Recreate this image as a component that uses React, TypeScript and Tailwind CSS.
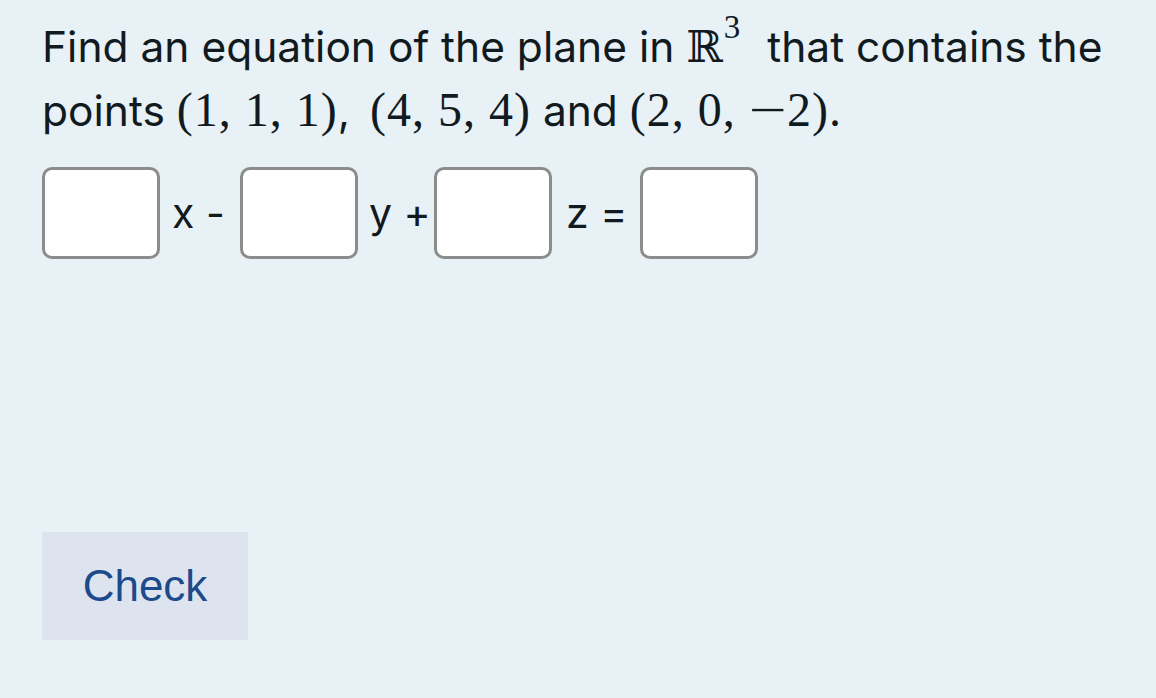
import React from "react";

function AnswerBox() {
    return (
        <input
            type="text"
            className="w-[118px] h-[92px] shrink-0 rounded-[10px] border-[3px] border-[#8c8c8c] bg-white outline-none"
        />
    );
}

function Op({ label, className }: { label: string; className: string }) {
    return (
        <span className={`shrink-0 flex items-center h-[92px] ${className}`}>
            <span className="font-['Inter',sans-serif] text-[41px] leading-none text-[#111a1f] whitespace-pre">
                {label}
            </span>
        </span>
    );
}

export default function App() {
    const math = "font-['Liberation_Serif',serif] text-[48px] tracking-[1px]";
    return (
        <div className="min-h-[698px] w-full bg-[#e8f1f5] font-['Inter',sans-serif] text-[#111a1f]">
            <div className="pl-[42px] pr-6 pt-[14px]">
                <p className="text-[42.5px] leading-[63px]">
                    Find an equation of the plane in{" "}
                    <span className={math}>
                        <span className="font-['DejaVu_Serif',serif] text-[44px]">ℝ</span>
                        <sup className="text-[33px] relative -top-[24px] mr-[14px]">3</sup>
                    </span>{" "}
                    that contains the
                    <br />
                    points <span className={math}>(1, 1, 1)</span>,{" "}
                    <span className={`${math} ml-[8px]`}>(4, 5, 4)</span> and{" "}
                    <span className={math}>
                        (2, 0, <span className="inline-block scale-x-[1.4] mx-[5px]">−</span>2).
                    </span>
                </p>

                <div className="mt-[25px] flex items-center">
                    <AnswerBox />
                    <Op label="x -" className="w-[80px] pl-[12px]" />
                    <AnswerBox />
                    <Op label="y +" className="w-[76px] pl-[11px]" />
                    <AnswerBox />
                    <Op label="z =" className="w-[88px] pl-[14px]" />
                    <AnswerBox />
                </div>

                <button className="mt-[273px] w-[206px] h-[108px] bg-[#dee4ef] text-[#1c4a8a] font-['Liberation_Sans',sans-serif] text-[44px]">
                    Check
                </button>
            </div>
        </div>
    );
}
